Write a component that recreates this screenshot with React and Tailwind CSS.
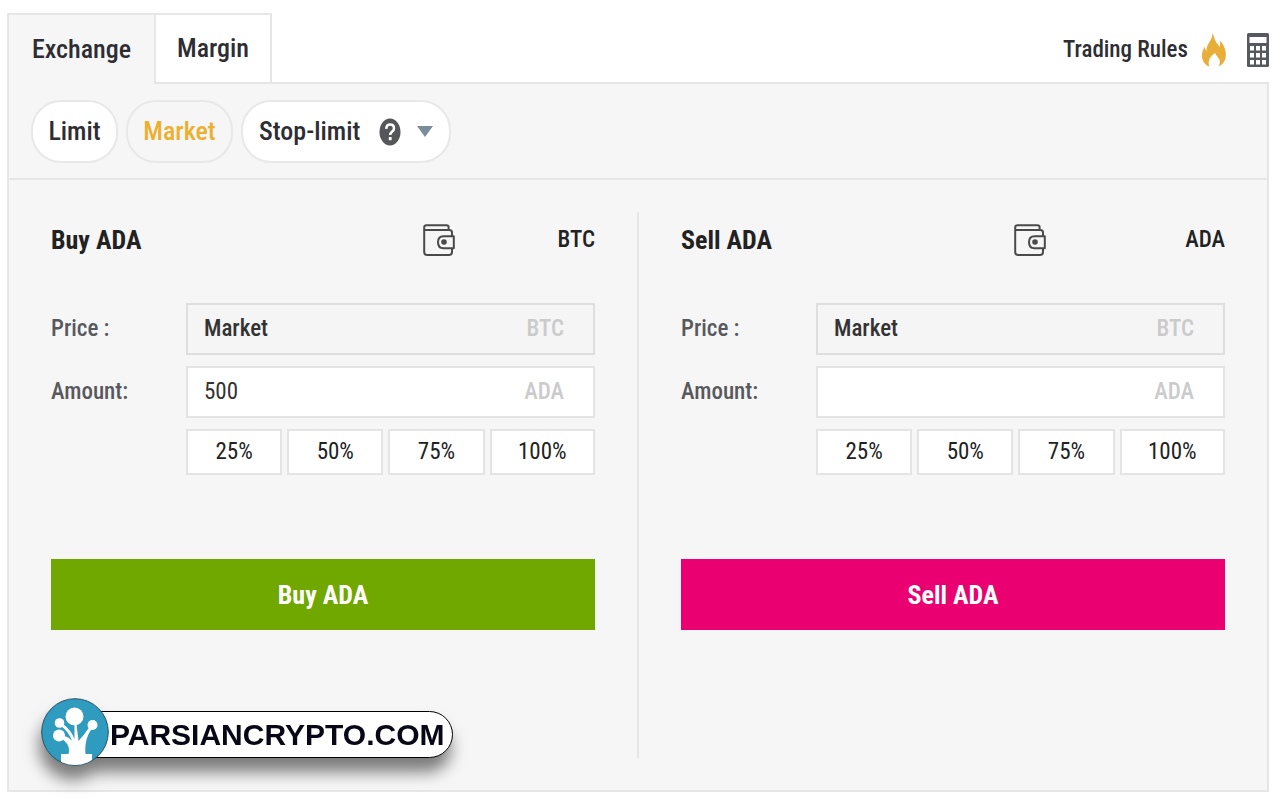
import React, { useState } from 'react';

const FlameIcon = () => (
  <svg width="26" height="34" viewBox="0 0 26 34" aria-hidden="true">
    <path
      d="M11.3 0C13.6 3.8 13.2 6.6 15.3 9.4C16.5 11 18 12.4 18.8 14.2C19.4 12 19.2 9.6 18.6 7.4C22 10.4 25.4 16.4 24.8 23C24.4 27.8 22 31.6 17.6 33.6C19.4 30.4 19.4 27 17 24.4C15.6 23 14.6 21.8 14.4 20C9.6 22.4 6.2 27.8 8.4 33.6C3.8 31.8 .8 27.4 .9 22.4C1 18.8 2.2 15.8 4 13.4C4 15.4 4.3 16.8 5.4 18C5.4 14.4 6.4 12 8.4 9C10.4 6 11.6 3.4 11.3 0Z"
      fill="#e8ae38"
    />
  </svg>
);

const CalculatorIcon = () => (
  <svg width="22" height="34" viewBox="0 0 22 34" aria-hidden="true">
    <rect width="22" height="34" rx="1.5" fill="#58595d" />
    <rect x="2.5" y="4" width="17" height="6" fill="#fff" />
    {[13, 20, 27].map((y) =>
      [3, 9, 15].map((x) => <rect key={`${x}-${y}`} x={x} y={y} width="4" height="4.5" fill="#fff" />)
    )}
  </svg>
);

const HelpIcon = () => (
  <svg width="22" height="28" viewBox="0 0 22 28" aria-hidden="true">
    <ellipse cx="11" cy="14" rx="10.5" ry="13.5" fill="#55565a" />
    <path d="M7.2 10.8C7.4 8 9 6.6 11.2 6.6C13.5 6.6 15 8.2 15 10.4C15 13.6 11.2 13.4 11.2 17" fill="none" stroke="#fff" strokeWidth="2.5" />
    <rect x="9.8" y="19" width="2.8" height="3.2" fill="#fff" />
  </svg>
);

const WalletIcon = () => (
  <svg width="32" height="32" viewBox="0 0 32 32" fill="none" stroke="#4a4a4a" strokeWidth="2" strokeLinejoin="round" aria-hidden="true">
    <path d="M1.2 4V28Q1.2 31 4 31H26Q29 31 29 28V24.5M29 12V8.5Q29 6 26.5 6H1.2V3.5Q1.2 1.2 3.5 1.2H23.5Q25.6 1.2 25.6 3V6" />
    <path d="M30.8 12.2H20.5Q15 12.2 15 18.2T20.5 24.3H30.8Z" />
    <circle cx="21" cy="18" r="1.8" fill="#4a4a4a" />
  </svg>
);

const TreeLogo = () => (
  <svg className="relative shrink-0" width="68" height="68" viewBox="0 0 68 68" aria-hidden="true">
    <defs>
      <clipPath id="logo-disc">
        <circle cx="34" cy="34" r="33" />
      </clipPath>
    </defs>
    <circle cx="34" cy="34" r="33.3" fill="#2f9bbf" stroke="#24506a" strokeWidth="1" />
    <g clipPath="url(#logo-disc)" fill="#fff">
      <circle cx="33.5" cy="18.5" r="9" />
      <circle cx="18.5" cy="25" r="4.8" />
      <circle cx="18" cy="37.5" r="6" />
      <circle cx="51.5" cy="27" r="5" />
      <path d="M33.5 26H35.5L37.5 43Q43 37 48.5 29L50.5 31Q43 42 44.5 56H51V68H20V56H27.5Q30 47 21 41L23 38Q28 39 31 43Q28 34 20 28L22 26Q30 32 33.5 41Z" />
    </g>
  </svg>
);

const Field = ({ id, label, unit, ...inputProps }) => (
  <div className="flex items-center">
    <label htmlFor={id} className="w-[135px] shrink-0 text-[#58595d]">
      {label}
    </label>
    <div
      className={`flex h-[52px] min-w-0 flex-1 items-center border-2 pl-4 pr-[29px] ${
        inputProps.readOnly ? 'border-[#dedede] bg-[#f5f5f5]' : 'border-[#e4e4e4] bg-white font-normal'
      }`}
    >
      <input id={id} type="text" className="min-w-0 flex-1 bg-transparent text-[#333] outline-none" {...inputProps} />
      <span className="font-medium text-[#cbcbcb]">{unit}</span>
    </div>
  </div>
);

const OrderForm = ({ side, balanceUnit, balanceWidth, initialAmount, buttonColor }) => {
  const [amount, setAmount] = useState(initialAmount);
  const title = `${side} ADA`;

  return (
    <form className="flex-1 px-[42px] pb-[128px] text-[23px] leading-8" onSubmit={(e) => e.preventDefault()}>
      <div className="flex h-14 items-center">
        <h2 className="flex-1 text-[26px] font-bold text-[#222]">{title}</h2>
        <div className={`flex items-center justify-between ${balanceWidth}`}>
          <WalletIcon />
          <span className="text-[#222]">{balanceUnit}</span>
        </div>
      </div>

      <div className="mt-[35px] flex flex-col gap-[11px]">
        <Field id={`${side}-price`} label="Price :" unit="BTC" value="Market" readOnly />
        <Field id={`${side}-amount`} label="Amount:" unit="ADA" value={amount} onChange={(e) => setAmount(e.target.value)} />
        <div className="ml-[135px] flex gap-[5px]">
          {['25%', '50%', '75%', '100%'].map((percent) => (
            <button
              key={percent}
              type="button"
              className="h-[46px] flex-1 cursor-pointer border-2 border-[#e4e4e4] bg-white font-normal text-[#222] last:grow-[1.1]"
            >
              {percent}
            </button>
          ))}
        </div>
      </div>

      <button type="submit" className={`mt-[84px] h-[71px] w-full cursor-pointer text-[26px] font-bold text-white ${buttonColor}`}>
        {title}
      </button>
    </form>
  );
};

const App = () => {
  return (
    <div className="min-h-screen bg-white pt-[13px] pr-[11px] pl-[7px] font-['Roboto_Condensed','Liberation_Sans_Narrow',sans-serif] text-[26px] font-medium text-[#2d2d33]">
      <header className="flex items-start justify-between">
        <nav className="relative z-10 -mb-[2px] flex h-[71px]">
          <button className="w-[147px] cursor-pointer border-2 border-r-0 border-b-0 border-[#e6e6e6] bg-[#f6f6f6]">Exchange</button>
          <button className="w-[118px] cursor-pointer border-2 border-[#e6e6e6] bg-white">Margin</button>
        </nav>
        <div className="flex items-center pt-5">
          <a href="#rules" className="mr-[13px] text-[23px] leading-8">
            Trading Rules
          </a>
          <FlameIcon />
          <button className="ml-5 cursor-pointer" aria-label="Calculator">
            <CalculatorIcon />
          </button>
        </div>
      </header>

      <main className="relative border-2 border-[#e6e6e6] bg-[#f6f6f6]">
        <div className="flex gap-2 border-b-2 border-[#e6e6e6] px-[22px] pt-4 pb-[15px]">
          <button className="h-[63px] w-[87px] cursor-pointer rounded-[30px] border-2 border-[#e8e8e8] bg-white">Limit</button>
          <button className="h-[63px] w-[107px] cursor-pointer rounded-[30px] border-2 border-[#e8e8e8] text-[#ebb02f]">Market</button>
          <button className="flex h-[63px] w-[210px] cursor-pointer items-center rounded-[30px] border-2 border-[#e8e8e8] bg-white pl-4" aria-haspopup="listbox">
            Stop-limit
            <span className="mr-4 ml-auto">
              <HelpIcon />
            </span>
            <svg className="mr-4" width="16" height="11" viewBox="0 0 16 11" aria-hidden="true">
              <path d="M0 0H16L8 11Z" fill="#7b8c9a" />
            </svg>
          </button>
        </div>

        <div className="flex pt-8 pb-8">
          <OrderForm side="Buy" balanceUnit="BTC" balanceWidth="w-[172px]" initialAmount="500" buttonColor="bg-[#70a800]" />
          <div className="w-[2px] bg-[#e6e6e6]" />
          <OrderForm side="Sell" balanceUnit="ADA" balanceWidth="w-[211px]" initialAmount="" buttonColor="bg-[#ea0070]" />
        </div>

        <div className="absolute bottom-6 left-8 flex items-center drop-shadow-[-2px_14px_8px_rgba(0,0,0,0.5)]">
          <TreeLogo />
          <div className="mt-1 -ml-8 flex h-[47px] items-center rounded-r-full border border-black bg-white pr-2 pl-8 font-['Liberation_Sans',sans-serif] text-[30px] font-bold text-[#070716]">
            PARSIANCRYPTO.COM
          </div>
        </div>
      </main>
    </div>
  );
};

export default App;
